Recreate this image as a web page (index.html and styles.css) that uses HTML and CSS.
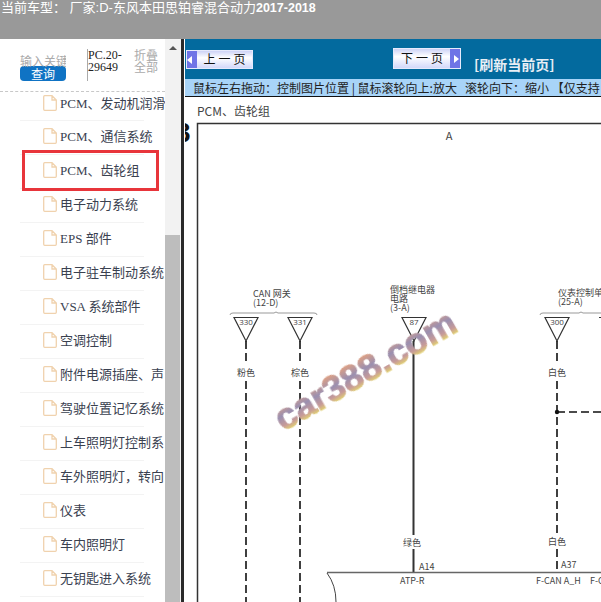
FILE: index.html
```html
<!DOCTYPE html>
<html lang="zh">
<head>
<meta charset="utf-8">
<title>PCM、齿轮组</title>
<link rel="stylesheet" href="styles.css">
</head>
<body>
<header class="topbar">当前车型： 厂家:D-东风本田思铂睿混合动力<b>2017-2018</b></header>
<div class="layout">
  <aside class="side">
    <div class="side-scroll">
      <div class="tools">
        <div class="search">
          <div class="kw">输入关键</div>
          <div class="query">查询</div>
        </div>
        <div class="code">PC.20-<br>29649</div>
        <div class="fold">折叠<br>全部</div>
      </div>
      <ul class="tree">
        <li><svg class="doc"><use href="#d"/></svg>PCM、发动机润滑</li>
        <li><svg class="doc"><use href="#d"/></svg>PCM、通信系统</li>
        <li class="hl"><svg class="doc"><use href="#d"/></svg>PCM、齿轮组</li>
        <li><svg class="doc"><use href="#d"/></svg>电子动力系统</li>
        <li><svg class="doc"><use href="#d"/></svg>EPS 部件</li>
        <li><svg class="doc"><use href="#d"/></svg>电子驻车制动系统</li>
        <li><svg class="doc"><use href="#d"/></svg>VSA 系统部件</li>
        <li><svg class="doc"><use href="#d"/></svg>空调控制</li>
        <li><svg class="doc"><use href="#d"/></svg>附件电源插座、声</li>
        <li><svg class="doc"><use href="#d"/></svg>驾驶位置记忆系统</li>
        <li><svg class="doc"><use href="#d"/></svg>上车照明灯控制系</li>
        <li><svg class="doc"><use href="#d"/></svg>车外照明灯，转向</li>
        <li><svg class="doc"><use href="#d"/></svg>仪表</li>
        <li><svg class="doc"><use href="#d"/></svg>车内照明灯</li>
        <li><svg class="doc"><use href="#d"/></svg>无钥匙进入系统</li>
      </ul>
    </div>
    <div class="scrollbar">
      <div class="arrow"></div>
      <div class="thumb"></div>
    </div>
  </aside>
  <div class="split"></div>
  <main class="main">
    <div class="toolbar">
      <div class="btn prev"><span class="cap cap-l"></span><span class="btn-text">上 一 页</span></div>
      <div class="btn next"><span class="btn-text">下 一 页</span><span class="cap cap-r"></span></div>
      <div class="refresh">[刷新当前页]</div>
    </div>
    <div class="hint">鼠标左右拖动：控制图片位置 | 鼠标滚轮向上:放大 &nbsp; 滚轮向下：缩小 【仅支持</div>
    <div class="page">
      <div class="page-title">PCM、齿轮组</div>
      <svg class="diagram" width="416" height="505" viewBox="0 0 416 505">
        <defs>
          <linearGradient id="wm" x1="0" y1="0" x2="0" y2="1">
            <stop offset="0.120" stop-color="#e6a27e"/>
            <stop offset="0.450" stop-color="#9a8fb0"/>
            <stop offset="0.680" stop-color="#c79a98"/>
            <stop offset="0.820" stop-color="#e2d272"/>
          </linearGradient>
        </defs>
        <rect x="12.500" y="26.500" width="420" height="490" class="frame"/>
        <text class="cut" x="-10" y="45">3</text>
        <text x="264" y="43" class="lbl big" text-anchor="middle">A</text>

        <text x="68" y="200" class="lbl">CAN 网关</text>
        <text x="68" y="209" class="lbl">(12-D)</text>
        <path d="M45 218 q0 -2 3 -2 h41 l2 -1 l2 1 h36 q3 0 3 2" class="thin"/>
        <path d="M49 220.500 H73 L61 244Z M103 220.500 H127 L115 244Z M360 220.500 H384 L372 244Z" class="tri"/>
        <text x="61" y="228" class="num" text-anchor="middle">330</text>
        <text x="115" y="228" class="num" text-anchor="middle">331</text>

        <text x="205" y="196" class="lbl">倒档继电器</text>
        <text x="205" y="205" class="lbl">电路</text>
        <text x="205" y="214" class="lbl">(3-A)</text>
        <path d="M217 220.500 H241 L229 244Z" class="tri"/>
        <text x="229" y="228" class="num" text-anchor="middle">87</text>

        <text x="373" y="199" class="lbl">仪表控制单元</text>
        <text x="373" y="208" class="lbl">(25-A)</text>
        <path d="M355 218 q0 -2 3 -2 h36 l2 -1 l2 1 h30" class="thin"/>
        <text x="372" y="228" class="num" text-anchor="middle">300</text>
        <path d="M414 220.500 H430 L422 236" class="tri"/>

        <path d="M61 244 V268 M115 244 V268 M372 244 V268 M61 284 V505 M115 284 V505 M372 284 V436 M372 452 V475" class="dash"/>
        <path d="M372 315 H416" class="dash"/>
        <circle cx="372" cy="315" r="2.200" fill="#111"/>
        <path d="M228.500 244 V438 M228.500 452 V475" class="solid"/>
        <text x="61" y="279" class="lbl" text-anchor="middle">粉色</text>
        <text x="115" y="279" class="lbl" text-anchor="middle">棕色</text>
        <text x="372" y="279" class="lbl" text-anchor="middle">白色</text>
        <text x="227" y="449" class="lbl" text-anchor="middle">绿色</text>
        <text x="372" y="448" class="lbl" text-anchor="middle">白色</text>
        <text x="234" y="473" class="lbl">A14</text>
        <text x="376" y="471" class="lbl">A37</text>
        <path d="M142 475.500 H416" class="base"/>
        <path d="M142 476 Q151 488 151 505" class="thin dark"/>
        <text x="215" y="487" class="lbl">ATP-R</text>
        <text x="351" y="487" class="lbl">F-CAN A_H</text>
        <text x="405" y="487" class="lbl">F-C</text>
        <g transform="rotate(-30 180 273)">
          <text x="180" y="286" class="mark" text-anchor="middle" fill="url(#wm)" stroke="url(#wm)">car388.com</text>
        </g>
      </svg>
    </div>
  </main>
</div>
<svg class="defs" width="0" height="0">
  <symbol id="d" viewBox="0 0 14 16">
    <path d="M.7 1.700 Q.7 .7 1.700 .7 H9 L13.300 5 V14.300 Q13.300 15.300 12.300 15.300 H1.700 Q.7 15.300 .7 14.300Z M9 .7 V5 H13.300" fill="#fff" stroke="#f0d2ae" stroke-width="1.300"/>
  </symbol>
</svg>
</body>
</html>
```
FILE: styles.css
```css
*, *::before, *::after { box-sizing: border-box; }
html, body { margin: 0; height: 100%; overflow: hidden; }
body { width: 601px; height: 602px; background: #fff; font-family: "Liberation Serif", "Noto Sans CJK SC", serif; display: flex; flex-direction: column; }
.topbar { height: 39px; flex: none; background: #999; color: #fff; font: 13px/15px "Liberation Sans", "Noto Sans CJK SC", sans-serif; padding: 0 0 0 1px; white-space: nowrap; }
.topbar b { font-weight: 700; font-size: 12.500px; }
.layout { flex: 1; display: flex; min-height: 0; }
.side { width: 181px; flex: none; display: flex; background: #fff; }
.side-scroll { width: 165px; flex: none; overflow: hidden; }
.tools { height: 42px; margin: 10px 0 0; padding: 0 0 0 20px; display: flex; }
.search { width: 46px; flex: none; padding-top: 5px; overflow: hidden; }
.kw { font: 12px/14px "Noto Sans CJK SC", sans-serif; color: #aaa; white-space: nowrap; width: 47px; overflow: hidden; }
.query { width: 46px; height: 15px; margin-top: -2px; background: #0f73c4; color: #fff; border-radius: 4px; text-align: center; font: 12px/15px "Noto Sans CJK SC", sans-serif; }
.code { width: 47px; margin-left: 21px; height: 32px; border-left: 1px solid #aaa; font-size: 12px; line-height: 12px; color: #222; }
.fold { margin-left: 0; font: 12px/12px "Noto Sans CJK SC", sans-serif; color: #aaa; white-space: nowrap; }
.tree { list-style: none; margin: 0; padding: 0; border-top: 1px dashed #c8c8c8; }
.tree li { height: 34px; width: 124px; margin-left: 20px; display: flex; align-items: center; white-space: nowrap; font: 13px/17px "Liberation Serif", "Noto Sans CJK SC", serif; color: #3a4150; border-bottom: 1px solid #f3f3f3; padding: 0 0 3px 23px; position: relative; }
.tree li:first-child { height: 29px; padding-bottom: 6px; }
.doc { width: 14px; height: 16px; flex: none; margin-right: 3px; }
.hl::after { content: ""; position: absolute; left: 2px; top: -5px; width: 137px; height: 41px; border: 3px solid #e8353b; }
.scrollbar { width: 16px; flex: none; background: #f2f2f2; position: relative; }
.arrow { width: 0; height: 0; margin: 7px auto 0; border: 4px solid transparent; border-top: 0; border-bottom: 4px solid #555; }
.thumb { position: absolute; left: 0; right: 1px; top: 196px; bottom: 0; background: #bdbdbd; }
.split { width: 4px; flex: none; background: #fff; border-left: 3px solid #2a2a2a; }
.main { flex: 1; min-width: 0; display: flex; flex-direction: column; overflow: hidden; }
.toolbar { height: 40px; flex: none; background: #036a9e; display: flex; align-items: flex-start; padding: 11px 0 0 1px; }
.btn { height: 19px; display: flex; align-items: center; background: linear-gradient(#cdd3f6, #fff 40%, #d3d8fa); border: 1px solid #e6eafc; color: #111; font: 12px/16px "Liberation Serif", "Noto Sans CJK SC", serif; white-space: nowrap; }
.prev { width: 67px; }
.next { width: 68px; height: 21px; margin: -2px 0 0 140px; }
.btn-text { flex: 1; text-align: center; }
.cap { width: 10px; height: 100%; background: #6f74e6; position: relative; flex: none; }
.cap::after { content: ""; position: absolute; top: 50%; margin-top: -4px; border: 4px solid transparent; }
.cap-l::after { left: 0; border-right: 5px solid #fff; border-left: 0; }
.cap-r::after { right: 1px; border-left: 5px solid #fff; border-right: 0; }
.refresh { margin: 5px 0 0 13px; color: #e8eef5; font: 700 14px/18px "Noto Sans CJK SC", sans-serif; white-space: nowrap; }
.hint { height: 18px; flex: none; background: #a8d4f8; color: #222; border-bottom: 1px solid #111; font: 12px/17px "Noto Sans CJK SC", sans-serif; padding: 0 0 0 8px; white-space: nowrap; overflow: hidden; }
.page { flex: 1; position: relative; min-height: 0; overflow: hidden; }
.page-title { padding: 6px 0 0 12px; font: 12px/16px "Noto Sans CJK SC", sans-serif; color: #444; }
.diagram { position: absolute; left: 0; top: 0; overflow: hidden; }
.frame { fill: #fff; stroke: #333; stroke-width: 1.500; }
.cut { font: 700 28px "Liberation Sans", sans-serif; fill: #111; }
.lbl { font: 9px "Noto Sans CJK SC", "Open Sans", sans-serif; fill: #444; }
.big { font-size: 11px; }
.num { font: 8px "Open Sans", sans-serif; fill: #444; }
.thin { fill: none; stroke: #999; stroke-width: 1; }
.dark { stroke: #444; }
.tri { fill: #fff; stroke: #333; stroke-width: 1.200; }
.dash { fill: none; stroke: #111; stroke-width: 1.600; stroke-dasharray: 8 4; }
.solid { fill: none; stroke: #333; stroke-width: 2; }
.base { fill: none; stroke: #666; stroke-width: 1.500; }
.mark { font: 700 37px "Liberation Sans", sans-serif; stroke-width: 1px; filter: blur(.6px); }
.defs { position: absolute; }
```
